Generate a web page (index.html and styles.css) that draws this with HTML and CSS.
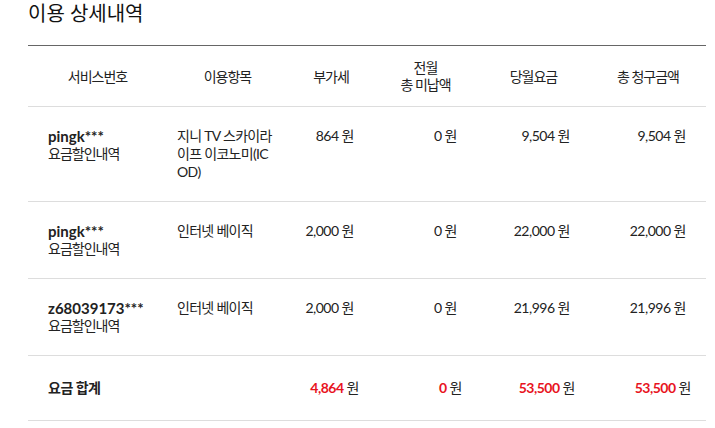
FILE: index.html
```html
<!DOCTYPE html>
<html lang="ko">
<head>
<meta charset="utf-8">
<link rel="stylesheet" href="styles.css">
</head>
<body>
<div class="page">
  <h2 class="title">이용 상세내역</h2>
  <table class="detail">
    <colgroup>
      <col class="c1"><col class="c2"><col class="c3"><col class="c4"><col class="c5"><col class="c6">
    </colgroup>
    <thead>
      <tr>
        <th>서비스번호</th>
        <th>이용항목</th>
        <th>부가세</th>
        <th>전월<br>총 미납액</th>
        <th>당월요금</th>
        <th>총 청구금액</th>
      </tr>
    </thead>
    <tbody>
      <tr>
        <td class="svc"><strong>pingk***</strong><span>요금할인내역</span></td>
        <td class="item">지니 TV 스카이라<br>이프 이코노미(IC<br>OD)</td>
        <td class="num">864 원</td>
        <td class="num">0 원</td>
        <td class="num">9,504 원</td>
        <td class="num">9,504 원</td>
      </tr>
      <tr>
        <td class="svc"><strong>pingk***</strong><span>요금할인내역</span></td>
        <td class="item">인터넷 베이직</td>
        <td class="num">2,000 원</td>
        <td class="num">0 원</td>
        <td class="num">22,000 원</td>
        <td class="num">22,000 원</td>
      </tr>
      <tr>
        <td class="svc"><strong>z68039173***</strong><span>요금할인내역</span></td>
        <td class="item">인터넷 베이직</td>
        <td class="num">2,000 원</td>
        <td class="num">0 원</td>
        <td class="num">21,996 원</td>
        <td class="num">21,996 원</td>
      </tr>
      <tr class="total">
        <td class="svc"><b>요금 합계</b></td>
        <td></td>
        <td class="num"><em>4,864</em> 원</td>
        <td class="num"><em>0</em> 원</td>
        <td class="num"><em>53,500</em> 원</td>
        <td class="num"><em>53,500</em> 원</td>
      </tr>
    </tbody>
  </table>
</div>
</body>
</html>
```

FILE: styles.css
```css
* { box-sizing: border-box; }
body {
  margin: 0;
  background: #fff;
  color: #222;
  font-family: Lato, "Noto Sans CJK KR", sans-serif;
}
.page {
  padding: 0 0 0 28px;
  width: 706px;
}
.title {
  margin: 0;
  font-size: 20px;
  line-height: 26px;
  font-weight: normal;
  color: #111;
  height: 45px;
}
.detail {
  width: 678px;
  border-collapse: collapse;
  table-layout: fixed;
  font-size: 14px;
}
.c1 { width: 139px; }
.c2 { width: 121px; }
.c3 { width: 86px; }
.c4 { width: 103px; }
.c5 { width: 113px; }
.c6 { width: 116px; }
.detail thead tr {
  border-top: 1px solid #666;
  border-bottom: 1px solid #ddd;
}
.detail th {
  font-weight: normal;
  text-align: center;
  padding: 13px 0;
  line-height: 17px;
  color: #222;
  letter-spacing: -1px;
}
.detail tbody tr { border-bottom: 1px solid #ddd; }
.detail td {
  vertical-align: top;
  padding: 20px 0;
  line-height: 18px;
  color: #222;
}
.detail td.svc { padding-left: 20px; }
.detail td.svc strong {
  display: block;
  font-size: 15px;
  font-weight: bold;
  color: #222;
}
.detail td.svc span { display: block; letter-spacing: -1px; }
.detail td.svc b { color: #222; letter-spacing: -0.5px; }
.detail td.item { padding-left: 10px; letter-spacing: -0.7px; }
.detail td.num {
  text-align: right;
  padding-right: 20px;
  letter-spacing: -0.5px;
}
.detail tr.total td { padding-top: 23px; padding-bottom: 23px; }
.detail tr.total td.num { padding-right: 15px; }
.detail tr.total em {
  font-style: normal;
  font-weight: bold;
  color: #e8141e;
}
```
